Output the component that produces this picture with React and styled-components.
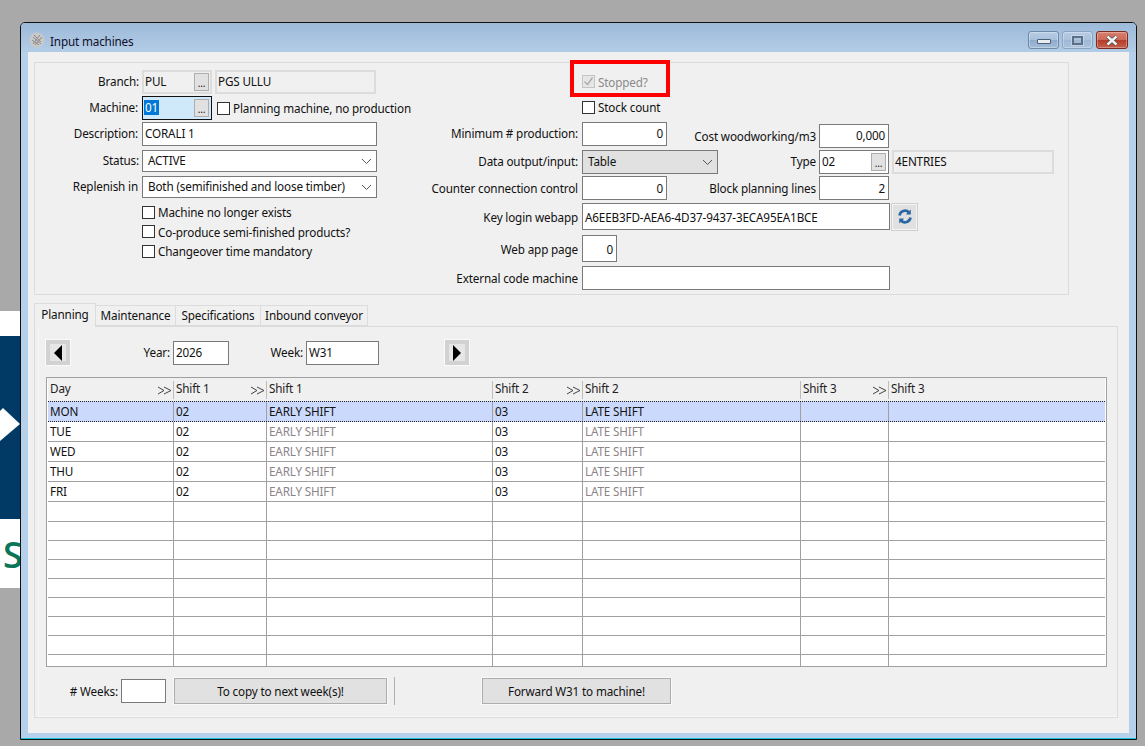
import React from "react";
import styled, { createGlobalStyle } from "styled-components";

const Global = createGlobalStyle`
  html, body { margin: 0; padding: 0; height: 100%; }
  body { background: #a9a9a9; overflow: hidden; font-family: "Noto Sans", "Open Sans", sans-serif; font-size: 11.7px; letter-spacing: -0.15px; color: #111; }
  * { box-sizing: border-box; }
`;

const Desktop = styled.div`position: relative; width: 1145px; height: 746px; overflow: hidden; background: #a9a9a9;`;
const Wallpaper = styled.div`
  position: absolute; left: 0; top: 311px; width: 24px; height: 277px; background: #fff; overflow: hidden;
`;
const WallBand = styled.div`position: absolute; left: 0; top: 25px; width: 24px; height: 183px; background: #003a65;`;
const WallArrow = styled.svg`position: absolute; left: 0; top: 96px;`;
const WallLetter = styled.span`
  position: absolute; left: 3px; top: 219px; font: 600 36px/50px "Open Sans", sans-serif; letter-spacing: 0; color: #0a7558;
`;

const Window = styled.div`
  position: absolute; left: 20px; top: 22px; width: 1117px; height: 718px;
  background: #b5d0ea; border: 1px solid #111; border-radius: 5px 5px 0 0;
  box-shadow: inset 0 -1px 0 #18c4d8;
  display: flex; flex-direction: column; padding: 0 7px 6px 7px;
`;
const TitleBar = styled.div`
  height: 29px; margin: 0 -7px; padding: 7px 8px 0 8px; flex: none;
  display: flex; align-items: center; gap: 4px;
  background: linear-gradient(#9dbad9, #b3cce6);
  border-radius: 4px 4px 0 0;
`;
const TitleIcon = styled.svg`flex: none; margin-right: 1px; margin-top: -3px;`;
const TitleText = styled.div`flex: 1; color: #10102a;`;
const WinBtn = styled.div`
  width: ${p => p.$w}px; height: 18px; align-self: flex-start; margin-top: 1px; border-radius: 3px;
  border: 1px solid ${p => p.$close ? "#7d2a20" : p.$dim ? "#8aa4c2" : "#6f89a8"};
  background: ${p => p.$close
    ? "linear-gradient(#d97f6e 0%, #cb6a58 48%, #b53a26 50%, #c4604c 100%)"
    : p.$dim
      ? "linear-gradient(#b6cce3 0%, #aac2dc 48%, #9fb8d5 50%, #abc3dd 100%)"
      : "linear-gradient(#b8cde3 0%, #a9c1dc 48%, #8faac9 50%, #a5bdd9 100%)"};
  box-shadow: inset 0 0 0 1px rgba(255,255,255,.3);
  display: flex; align-items: center; justify-content: center; margin-left: ${p => p.$first ? 0 : "-1px"};
`;
const MinGlyph = styled.div`width: 14px; height: 5px; background: #e9edf2; border: 1px solid #4a5f78; border-radius: 1px; margin-top: 3px;`;
const MaxGlyph = styled.div`width: 11px; height: 9px; border: 2px solid #5c6f85; background: transparent; box-shadow: 0 0 0 1px rgba(255,255,255,.3);`;

const Client = styled.div`
  flex: 1; background: #f0f0f0; padding: 10px 10px 15px 6px; display: flex; flex-direction: column; min-height: 0;
`;
const TopPanel = styled.div`
  width: 1035px; height: 233px; flex: none; border: 1px solid #dcdcdc; display: flex;
`;
const LeftCol = styled.div`width: 386px; flex: none; padding-top: 7px; display: flex; flex-direction: column;`;
const RightCol = styled.div`flex: 1; padding-top: 5px; display: flex; flex-direction: column;`;

const Row = styled.div`
  display: flex; align-items: center; height: ${p => p.$h}px; margin-bottom: ${p => p.$mb || 0}px; flex: none;
`;
const Label = styled.div`
  width: ${p => p.$w}px; flex: none; text-align: right; white-space: nowrap; color: #111;
  padding-right: ${p => p.$pr ?? 3}px; padding-bottom: ${p => p.$lift ? 2 : 0}px; margin-top: ${p => p.$mt || 0}px;
`;
const Field = styled.div`
  width: ${p => p.$w}px; height: ${p => p.$h || 24}px; flex: none; background: ${p => p.$bg || "#fff"};
  border: ${p => p.$light ? "2px solid #dcdcdc" : "1px solid #7a7a7a"};
  margin-left: ${p => p.$ml || 0}px; margin-top: ${p => p.$mt || 0}px;
  display: flex; align-items: center; justify-content: ${p => p.$right ? "flex-end" : "flex-start"};
  padding: 0 ${p => p.$right ? 3 : p.$light ? 1 : 2}px ${p => p.$lift ? 2 : 0}px; white-space: nowrap; position: relative; overflow: hidden;
`;
const Lookup = styled(Field)`padding-right: ${p => p.$light ? 1 : 2}px; padding-bottom: 2px; justify-content: space-between;`;
const Dots = styled.div`
  width: 15px; height: 18px; margin-bottom: -2px; background: #e1e1e1; border: 1px solid #adadad; flex: none;
  display: flex; align-items: flex-end; justify-content: center; font-size: 10px; line-height: 13px; color: #111;
`;
const Sel = styled.span`background: #0078d7; color: #fff; padding: 0 1px; margin-left: -1px; line-height: 15px;`;
const Focus = styled.div`
  width: 70px; height: 24px; flex: none; background: #cfe9fb; border: 1px solid #111;
  display: flex; align-items: center; justify-content: space-between; padding: 0 2px 2px;
`;
const Combo = styled(Field)`padding: 0 4px 2px 5px; justify-content: space-between;`;
const ChevronSvg = styled.svg`margin-bottom: -2px; flex: none;`;
const Check = styled.label`
  display: flex; align-items: center; gap: 3px; white-space: nowrap; color: ${p => p.$off ? "#8a8a8a" : "#111"};
  margin-left: ${p => p.$ml || 0}px;
`;
const Box = styled.span`
  width: 13px; height: 13px; flex: none; background: ${p => p.$off ? "#e6e6e6" : "#fff"}; border: 1px solid ${p => p.$off ? "#c4c4c4" : "#333"};
  display: flex; align-items: center; justify-content: center;
`;
const HighlightBox = styled.div`
  width: 100px; height: 37px; margin-left: 149px; border: 4px solid #f00; margin-top: -8px; flex: none;
  display: flex; align-items: center; padding: 6px 0 0 8px;
`;
const RefreshBtn = styled.div`
  width: 27px; height: 28px; flex: none; margin-left: 1px; background: #e1e1e1; border: 1px solid #cfcfcf; box-shadow: inset 0 0 0 1px #f4f4f4;
  display: flex; align-items: center; justify-content: center;
`;

const Tabs = styled.div`display: flex; align-items: flex-end; height: 23px; margin-top: 8px; flex: none;`;
const Tab = styled.div`
  width: ${p => p.$w}px; height: ${p => p.$active ? 24 : 21}px; background: #f0f0f0;
  border: 1px solid #dcdcdc; border-bottom: ${p => p.$active ? "none" : "1px solid #dcdcdc"};
  margin-left: ${p => p.$active ? 0 : "-1px"}; margin-bottom: ${p => p.$active ? "-1px" : 0};
  padding-bottom: ${p => p.$active ? 4 : 2}px;
  display: flex; align-items: center; justify-content: center; white-space: nowrap; position: relative; z-index: ${p => p.$active ? 1 : 0};
`;
const TabPanel = styled.div`
  flex: 1; width: 1084px; border: 1px solid #dcdcdc; box-shadow: inset 3px 0 0 #f0f0f0, inset 4px -1px 0 #f9f9f9;
  padding: 12px 10px 10px 10px; display: flex; flex-direction: column; min-height: 0;
`;
const WeekBar = styled.div`display: flex; align-items: center; height: 27px; flex: none;`;
const NavBtn = styled.div`
  width: 26px; height: 27px; flex: none; background: #e6e6e6; border: 1px solid #fafafa; box-shadow: inset 0 0 0 4px #d2d2d2;
  display: flex; align-items: center; justify-content: center; margin-left: ${p => p.$ml || 0}px;
`;
const BarLabel = styled.div`width: ${p => p.$w}px; flex: none; text-align: right; padding: 0 3px 2px 0; white-space: nowrap;`;

const Grid = styled.div`
  margin-top: 11px; width: 1061px; height: 290px; flex: none; margin-left: 1px; background: #fff; border: 1px solid #a0a0a0; padding: 0 1px; overflow: hidden;
`;
const cols = "125px 93px 226px 90px 218px 88px 1fr";
const HeadRow = styled.div`
  display: grid; grid-template-columns: ${cols}; height: 24px; background: #f0f0f0; align-items: start;
`;
const HeadCell = styled.div`
  position: relative; height: 18px; margin-top: 3px; padding: 0 0 5px 2px; display: flex; align-items: center; color: #222;
  border-left: ${p => p.$first ? "none" : "1px solid #bdbdbd"};
`;
const More = styled.svg`position: absolute; right: 1px; top: 5px;`;
const BodyRow = styled.div`
  display: grid; grid-template-columns: ${cols}; height: ${p => p.$h}px;
  background: ${p => p.$sel ? "#cbdafc" : "#fff"};
  border-bottom: ${p => p.$sel ? "1px dotted #222" : p.$last ? "none" : "1px solid #a0a0a0"}; align-items: center;
  ${p => p.$sel && "border-top: 1px dotted #222; margin-top: -1px; height: 21px;"}
`;
const Cell = styled.div`
  height: 100%; padding: 0 0 2px 2px; display: flex; align-items: center; white-space: nowrap;
  border-left: ${p => p.$first ? "none" : "1px solid #a0a0a0"}; color: ${p => p.$dim ? "#8c8488" : "#111"};
`;

const Footer = styled.div`display: flex; align-items: center; height: 28px; margin-top: 10px; flex: none;`;
const FootLabel = styled.div`width: 76px; flex: none; text-align: right; padding-right: 3px; white-space: nowrap;`;
const PushBtn = styled.div`
  width: ${p => p.$w}px; height: 26px; flex: none; background: #e1e1e1; border: 1px solid #adadad; outline: 1px solid #f8f8f8;
  display: flex; align-items: center; justify-content: center; margin-left: ${p => p.$ml}px; white-space: nowrap;
`;
const Sep = styled.div`width: 1px; height: 28px; background: #b0b0b0; margin-left: 7px; flex: none;`;

const Chevron = () => (
  <ChevronSvg width="11" height="7" viewBox="0 0 11 7" fill="none"><path d="M1 1l4.5 4.5L10 1" stroke="#555" strokeWidth="1"/></ChevronSvg>
);
const Tick = ({ c = "#aaa" }) => (
  <svg width="11" height="11" viewBox="0 0 11 11" fill="none"><path d="M1.5 5.5L4.5 8.5L9.5 1.5" stroke={c} strokeWidth="1.3"/></svg>
);
const MoreIcon = () => (
  <More width="15" height="9" viewBox="0 0 15 9" fill="none">
    <path d="M1 1l6 3.5L1 8M7 1l7 3.5L7 8" stroke="#444" strokeWidth="1"/>
  </More>
);

const filled = (d) => [d, "02", "EARLY SHIFT", "03", "LATE SHIFT"];
const rows = [
  filled("MON"), filled("TUE"), filled("WED"), filled("THU"), filled("FRI"),
  ...Array(9).fill(["", "", "", "", ""]),
];
const heights = [20, 20, 20, 20, 20, 20, 19, 19, 19, 19, 19, 19, 19, 11];

export default function App() {
  return (
    <Desktop>
      <Global />
      <Wallpaper>
        <WallBand />
        <WallArrow width="24" height="36" viewBox="0 0 24 36"><path d="M0 4L3 1L20 17L0 34Z" fill="#fff" /></WallArrow>
        <WallLetter>S</WallLetter>
      </Wallpaper>
      <Window>
        <TitleBar>
          <TitleIcon width="16" height="16" viewBox="0 0 16 16">
            <circle cx="8" cy="8" r="7.5" fill="#c9c9c9" />
            <path d="M4 5l8 7M5 3l7 7M3 8l7 5M11 3L4 12M13 5l-7 8" stroke="#8a8a8a" strokeWidth="1" fill="none" />
          </TitleIcon>
          <TitleText>Input machines</TitleText>
          <WinBtn $first $w={31}><MinGlyph /></WinBtn>
          <WinBtn $dim $w={31}><MaxGlyph /></WinBtn>
          <WinBtn $close $w={32}>
            <svg width="14" height="11" viewBox="0 0 14 11"><path d="M2.5 1.5L11.5 9.5M11.5 1.5L2.5 9.5" stroke="#4a4a4a" strokeWidth="4"/><path d="M2.5 1.5L11.5 9.5M11.5 1.5L2.5 9.5" stroke="#f2f2f2" strokeWidth="2.4"/></svg>
          </WinBtn>
        </TitleBar>
        <Client>
          <TopPanel>
            <LeftCol>
              <Row $h={24} $mb={2}>
                <Label $w={107} $lift>Branch:</Label>
                <Lookup $w={70} $light $bg="#f0f0f0">PUL<Dots>...</Dots></Lookup>
                <Field $w={161} $ml={3} $light $lift $bg="#f0f0f0">PGS ULLU</Field>
              </Row>
              <Row $h={24} $mb={2}>
                <Label $w={107} $pr={4} $lift>Machine:</Label>
                <Focus><Sel>01</Sel><Dots>...</Dots></Focus>
                <Check $ml={5}><Box />Planning machine, no production</Check>
              </Row>
              <Row $h={24} $mb={4}>
                <Label $w={107} $pr={4} $lift>Description:</Label>
                <Field $w={235} $lift>CORALI 1</Field>
              </Row>
              <Row $h={22} $mb={4}>
                <Label $w={107} $lift>Status:</Label>
                <Combo $w={235} $h={22}>ACTIVE<Chevron /></Combo>
              </Row>
              <Row $h={22} $mb={4}>
                <Label $w={107} $pr={4} $lift>Replenish in</Label>
                <Combo $w={235} $h={22}>Both (semifinished and loose timber)<Chevron /></Combo>
              </Row>
              <Row $h={20}><Label $w={107} /><Check><Box />Machine no longer exists</Check></Row>
              <Row $h={19}><Label $w={107} /><Check><Box />Co-produce semi-finished products?</Check></Row>
              <Row $h={20}><Label $w={107} /><Check><Box />Changeover time mandatory</Check></Row>
            </LeftCol>
            <RightCol>
              <HighlightBox><Check $off><Box $off><Tick /></Box>Stopped?</Check></HighlightBox>
              <Row $h={20} $mb={5}><Label $w={161} /><Check><Box />Stock count</Check></Row>
              <Row $h={24} $mb={4}>
                <Label $w={161} $pr={4} $lift>Minimum # production:</Label>
                <Field $w={85} $right $lift>0</Field>
                <Label $w={152} $mt={3}>Cost woodworking/m3</Label>
                <Field $w={70} $right $mt={4} $lift>0,000</Field>
              </Row>
              <Row $h={24} $mb={2}>
                <Label $w={161} $pr={4} $lift>Data output/input:</Label>
                <Combo $w={136} $bg="#e1e1e1">Table<Chevron /></Combo>
                <Label $w={101} $lift>Type</Label>
                <Lookup $w={70}>02<Dots>...</Dots></Lookup>
                <Field $w={162} $ml={3} $light $lift $bg="#f0f0f0">4ENTRIES</Field>
              </Row>
              <Row $h={24} $mb={3}>
                <Label $w={161} $pr={4}>Counter connection control</Label>
                <Field $w={85} $right>0</Field>
                <Label $w={152}>Block planning lines</Label>
                <Field $w={70} $right>2</Field>
              </Row>
              <Row $h={27} $mb={5}>
                <Label $w={161} $pr={4}>Key login webapp</Label>
                <Field $w={308} $h={27}>A6EEB3FD-AEA6-4D37-9437-3ECA95EA1BCE</Field>
                <RefreshBtn>
                  <svg width="14" height="15" viewBox="0 0 14 15" fill="none">
                    <path d="M1.5 6.5A5.5 5.5 0 0 1 11 3.5" stroke="#2a66a4" strokeWidth="2.6"/>
                    <path d="M12.8 0.5V5.6H7.8Z" fill="#2a66a4"/>
                    <path d="M12.5 8.5A5.5 5.5 0 0 1 3 11.5" stroke="#2a66a4" strokeWidth="2.6"/>
                    <path d="M1.2 14.5V9.4H6.2Z" fill="#2a66a4"/>
                  </svg>
                </RefreshBtn>
              </Row>
              <Row $h={27} $mb={4}>
                <Label $w={161} $pr={4}>Web app page</Label>
                <Field $w={35} $h={27} $right>0</Field>
              </Row>
              <Row $h={24}>
                <Label $w={161} $pr={4}>External code machine</Label>
                <Field $w={308} />
              </Row>
            </RightCol>
          </TopPanel>
          <Tabs>
            <Tab $active $w={62}>Planning</Tab>
            <Tab $w={81}>Maintenance</Tab>
            <Tab $w={86}>Specifications</Tab>
            <Tab $w={108}>Inbound conveyor</Tab>
          </Tabs>
          <TabPanel>
            <WeekBar>
              <NavBtn><svg width="10" height="16" viewBox="0 0 10 16"><path d="M9 0V16L1 8Z" fill="#000"/></svg></NavBtn>
              <BarLabel $w={102}>Year:</BarLabel>
              <Field $w={56} $lift>2026</Field>
              <BarLabel $w={77}>Week:</BarLabel>
              <Field $w={73} $lift>W31</Field>
              <NavBtn $ml={65}><svg width="10" height="16" viewBox="0 0 10 16"><path d="M1 0V16L9 8Z" fill="#000"/></svg></NavBtn>
            </WeekBar>
            <Grid>
              <HeadRow>
                <HeadCell $first>Day<MoreIcon /></HeadCell>
                <HeadCell>Shift 1<MoreIcon /></HeadCell>
                <HeadCell>Shift 1</HeadCell>
                <HeadCell>Shift 2<MoreIcon /></HeadCell>
                <HeadCell>Shift 2</HeadCell>
                <HeadCell>Shift 3<MoreIcon /></HeadCell>
                <HeadCell>Shift 3</HeadCell>
              </HeadRow>
              {rows.map((r, i) => (
                <BodyRow key={i} $h={heights[i]} $sel={i === 0} $last={i === rows.length - 1}>
                  <Cell $first>{r[0]}</Cell>
                  <Cell>{r[1]}</Cell>
                  <Cell $dim={i > 0}>{r[2]}</Cell>
                  <Cell>{r[3]}</Cell>
                  <Cell $dim={i > 0}>{r[4]}</Cell>
                  <Cell />
                  <Cell />
                </BodyRow>
              ))}
            </Grid>
            <Footer>
              <FootLabel># Weeks:</FootLabel>
              <Field $w={45}></Field>
              <PushBtn $w={213} $ml={8}>To copy to next week(s)!</PushBtn>
              <Sep />
              <PushBtn $w={189} $ml={87}>Forward W31 to machine!</PushBtn>
            </Footer>
          </TabPanel>
        </Client>
      </Window>
    </Desktop>
  );
}
